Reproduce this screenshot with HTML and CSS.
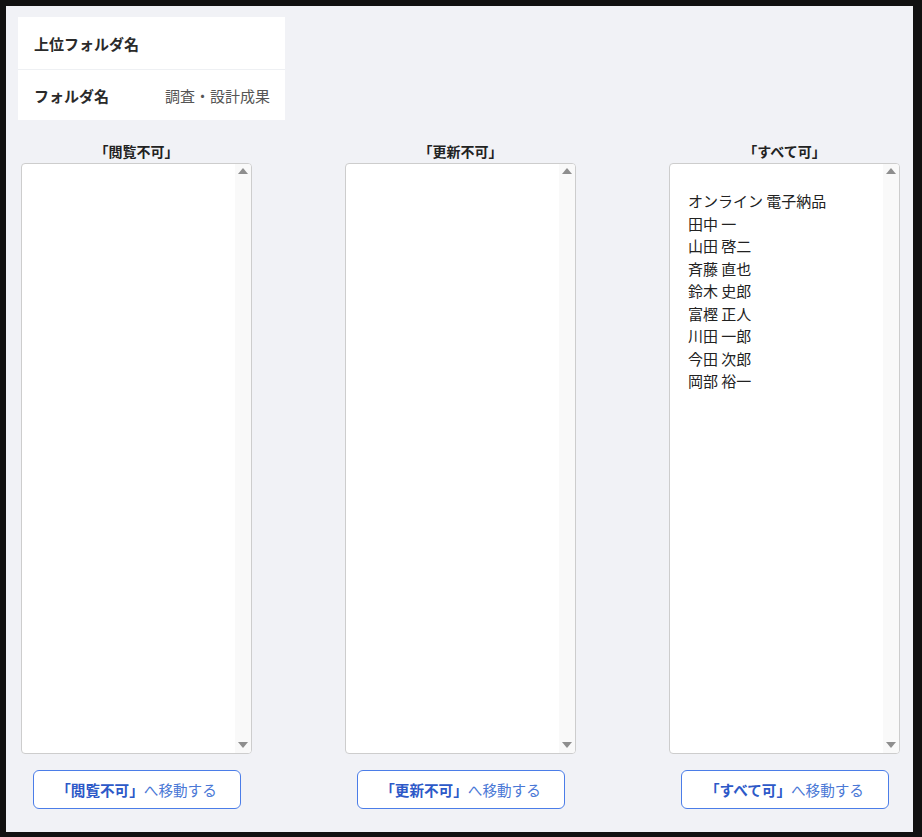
FILE: index.html
```html
<!DOCTYPE html>
<html lang="ja">
<head>
	<meta charset="UTF-8">
	<title>フォルダ権限</title>
	<link rel="stylesheet" href="styles.css">
</head>
<body>
	<div class="frame">
		<div class="info">
			<div class="info-row">
				<span class="info-label">上位フォルダ名</span>
				<span class="info-value"></span>
			</div>
			<div class="info-row">
				<span class="info-label">フォルダ名</span>
				<span class="info-value">調査・設計成果</span>
			</div>
		</div>

		<div class="columns">
			<div class="col">
				<div class="col-title">「閲覧不可」</div>
				<div class="list">
					<ul class="list-body"></ul>
					<div class="scroll"><i class="up"></i><i class="down"></i></div>
				</div>
				<button class="move-btn"><b>「閲覧不可」</b>へ移動する</button>
			</div>
			<div class="col">
				<div class="col-title">「更新不可」</div>
				<div class="list">
					<ul class="list-body"></ul>
					<div class="scroll"><i class="up"></i><i class="down"></i></div>
				</div>
				<button class="move-btn"><b>「更新不可」</b>へ移動する</button>
			</div>
			<div class="col">
				<div class="col-title">「すべて可」</div>
				<div class="list">
					<ul class="list-body">
						<li>オンライン 電子納品</li>
						<li>田中 一</li>
						<li>山田 啓二</li>
						<li>斉藤 直也</li>
						<li>鈴木 史郎</li>
						<li>富樫 正人</li>
						<li>川田 一郎</li>
						<li>今田 次郎</li>
						<li>岡部 裕一</li>
					</ul>
					<div class="scroll"><i class="up"></i><i class="down"></i></div>
				</div>
				<button class="move-btn"><b>「すべて可」</b>へ移動する</button>
			</div>
		</div>
	</div>
</body>
</html>
```

FILE: styles.css
```css
html,body{
	margin: 0;
	padding: 0;
	background: #111;
}
body{
	font-family: "Noto Sans CJK JP", "Noto Sans", sans-serif;
	color: #222;
}
ul{
	padding: 0;
	margin: 0;
	list-style: none;
}
.frame{
	margin: 6px 9px 5px 6px;
	height: 826px;
	box-sizing: border-box;
	padding: 11px 12px 0 12px;
	background: #f1f2f6;
}
/* 上部のフォルダ情報 */
.info{
	width: 267px;
	background: #fff;
}
.info-row{
	height: 53px;
	display: flex;
	align-items: center;
	justify-content: space-between;
	padding: 0 15px 0 16px;
	font-size: 15px;
	border-bottom: 1px solid #eef0f3;
	box-sizing: border-box;
}
.info-row + .info-row{
	height: 50px;
	border-bottom: none;
}
.info-label{
	font-weight: bold;
	color: #2a2a2a;
}
.info-value{
	color: #555;
}
/* 3列 */
.columns{
	display: grid;
	grid-template-columns: 231px 231px 231px;
	column-gap: 93px;
	margin: 20px 0 0 3px;
}
.col{
	display: flex;
	flex-direction: column;
	align-items: center;
}
.col-title{
	height: 23px;
	line-height: 23px;
	font-size: 14px;
	font-weight: bold;
	color: #222;
}
.list{
	width: 100%;
	height: 591px;
	box-sizing: border-box;
	border: 1px solid #cdcdcd;
	border-radius: 4px;
	background: #fff;
	display: flex;
	overflow: hidden;
}
.list-body{
	flex: 1;
	padding: 26px 18px;
	font-size: 15px;
	line-height: 22.5px;
	color: #222;
}
.scroll{
	width: 16px;
	background: #f9f9f9;
	display: flex;
	flex-direction: column;
	justify-content: space-between;
	align-items: center;
	padding: 4px 0 5px;
}
.scroll i{
	display: block;
	width: 0;
	height: 0;
	border-left: 5px solid transparent;
	border-right: 5px solid transparent;
}
.scroll .up{
	border-bottom: 6px solid #8e8e8e;
}
.scroll .down{
	border-top: 6px solid #8e8e8e;
}
.move-btn{
	margin-top: 16px;
	width: 208px;
	height: 39px;
	border: 1px solid #4b7de8;
	border-radius: 6px;
	background: #fff;
	font-family: "Noto Sans CJK JP", "Noto Sans", sans-serif;
	font-size: 14.6px;
	color: #4a78d6;
	cursor: pointer;
	padding: 0;
}
.move-btn b{
	color: #2d59c8;
}
```
